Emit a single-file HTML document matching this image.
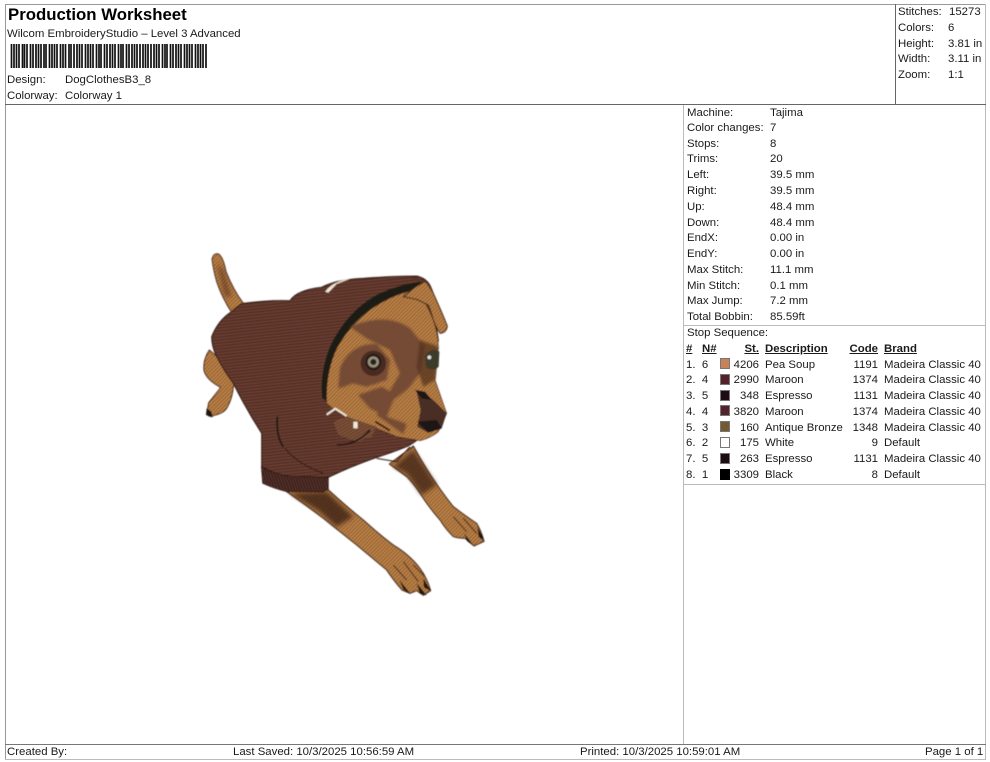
<!DOCTYPE html>
<html><head><meta charset="utf-8"><style>
html,body{margin:0;padding:0;background:#fff}
#p{position:relative;width:990px;height:762px;overflow:hidden;background:#fff;font-family:"Liberation Sans",sans-serif;font-size:11.4px;color:#1a1a1a}
#p div.t{position:absolute;line-height:18px;white-space:pre}
#p div.r{text-align:right}
#p div.l{position:absolute;background:#777}
#p div.s{position:absolute;width:10px;height:11px;box-sizing:border-box;border:1px solid #777}
.u{font-weight:bold;text-decoration:underline}
</style></head><body><div id="p">
<div class="l" style="left:5px;top:4px;width:981px;height:1px;background:#999"></div>
<div class="l" style="left:5px;top:4px;width:1px;height:755px;background:#999"></div>
<div class="l" style="left:985px;top:4px;width:1px;height:755px;background:#bbb"></div>
<div class="l" style="left:5px;top:104px;width:981px;height:1px;background:#666"></div>
<div class="l" style="left:895px;top:4px;width:1px;height:100px;background:#666"></div>
<div class="l" style="left:683px;top:105px;width:1px;height:640px;background:#bbb"></div>
<div class="l" style="left:684px;top:325px;width:302px;height:1px;background:#bbb"></div>
<div class="l" style="left:684px;top:484px;width:302px;height:1px;background:#bbb"></div>
<div class="l" style="left:5px;top:744px;width:981px;height:1px;background:#777"></div>
<div class="l" style="left:5px;top:759px;width:981px;height:1px;background:#bbb"></div>

<div class="t" style="left:8px;top:6px;font-size:16.8px;line-height:18px;font-weight:bold;color:#000">Production Worksheet</div>
<div class="t" style="left:7px;top:25px">Wilcom EmbroideryStudio – Level 3 Advanced</div>
<svg style="position:absolute;left:0;top:0" width="220" height="70"><path stroke="#111" fill="none" d="M11.5 44V68M14 44V68M16.5 44V68M19 44V68M22.5 44V68M24.5 44V68M27 44V68M30.5 44V68M33 44V68M36 44V68M38.5 44V68M41 44V68M44 44V68M46 44V68M49.5 44V68M52 44V68M54.5 44V68M57 44V68M60.5 44V68M63 44V68M65.5 44V68M69 44V68M71 44V68M74 44V68M77 44V68M79.5 44V68M82 44V68M85.5 44V68M88 44V68M90.5 44V68M93 44V68M96.5 44V68M99 44V68M101 44V68M104.5 44V68M107 44V68M110 44V68M112.5 44V68M115 44V68M118.5 44V68M121 44V68M123 44V68M126.5 44V68M129 44V68M132 44V68M134.5 44V68M137 44V68M140 44V68M143 44V68M145.5 44V68M148 44V68M151 44V68M154 44V68M156.5 44V68M159 44V68M162.5 44V68M165 44V68M167 44V68M170.5 44V68M173 44V68M176 44V68M178.5 44V68M181 44V68M184.5 44V68M187 44V68M189.5 44V68M192 44V68M195.5 44V68M198 44V68M200.5 44V68M203 44V68M206 44V68" stroke-width="1.7"/></svg>
<div class="t" style="left:7px;top:71px">Design:</div><div class="t" style="left:65px;top:71px">DogClothesB3_8</div>
<div class="t" style="left:7px;top:87px">Colorway:</div><div class="t" style="left:65px;top:87px">Colorway 1</div>

<div class="t" style="left:898px;top:3px">Stitches:</div><div class="t" style="left:949px;top:3px">15273</div>
<div class="t" style="left:898px;top:19px">Colors:</div><div class="t" style="left:948px;top:19px">6</div>
<div class="t" style="left:898px;top:35px">Height:</div><div class="t" style="left:948px;top:35px">3.81 in</div>
<div class="t" style="left:898px;top:50px">Width:</div><div class="t" style="left:948px;top:50px">3.11 in</div>
<div class="t" style="left:898px;top:66px">Zoom:</div><div class="t" style="left:948px;top:66px">1:1</div>

<div class="t" style="left:687px;top:104px">Machine:</div><div class="t" style="left:770px;top:104px">Tajima</div>
<div class="t" style="left:687px;top:119px">Color changes:</div><div class="t" style="left:770px;top:119px">7</div>
<div class="t" style="left:687px;top:135px">Stops:</div><div class="t" style="left:770px;top:135px">8</div>
<div class="t" style="left:687px;top:150px">Trims:</div><div class="t" style="left:770px;top:150px">20</div>
<div class="t" style="left:687px;top:166px">Left:</div><div class="t" style="left:770px;top:166px">39.5 mm</div>
<div class="t" style="left:687px;top:182px">Right:</div><div class="t" style="left:770px;top:182px">39.5 mm</div>
<div class="t" style="left:687px;top:198px">Up:</div><div class="t" style="left:770px;top:198px">48.4 mm</div>
<div class="t" style="left:687px;top:214px">Down:</div><div class="t" style="left:770px;top:214px">48.4 mm</div>
<div class="t" style="left:687px;top:229px">EndX:</div><div class="t" style="left:770px;top:229px">0.00 in</div>
<div class="t" style="left:687px;top:245px">EndY:</div><div class="t" style="left:770px;top:245px">0.00 in</div>
<div class="t" style="left:687px;top:261px">Max Stitch:</div><div class="t" style="left:770px;top:261px">11.1 mm</div>
<div class="t" style="left:687px;top:277px">Min Stitch:</div><div class="t" style="left:770px;top:277px">0.1 mm</div>
<div class="t" style="left:687px;top:292px">Max Jump:</div><div class="t" style="left:770px;top:292px">7.2 mm</div>
<div class="t" style="left:687px;top:308px">Total Bobbin:</div><div class="t" style="left:770px;top:308px">85.59ft</div>
<div class="t" style="left:687px;top:324px">Stop Sequence:</div>

<div class="t u" style="left:686px;top:340px">#</div><div class="t u" style="left:702px;top:340px">N#</div>
<div class="t r u" style="left:719px;width:40px;top:340px">St.</div><div class="t u" style="left:765px;top:340px">Description</div>
<div class="t r u" style="left:838px;width:40px;top:340px">Code</div><div class="t u" style="left:884px;top:340px">Brand</div>

<div class="t" style="left:686px;top:356px">1.  6</div><div class="s" style="left:720px;top:358px;background:#c98258"></div><div class="t r" style="left:719px;width:40px;top:356px">4206</div><div class="t" style="left:765px;top:356px">Pea Soup</div><div class="t r" style="left:838px;width:40px;top:356px">1191</div><div class="t" style="left:884px;top:356px">Madeira Classic 40</div>
<div class="t" style="left:686px;top:371px">2.  4</div><div class="s" style="left:720px;top:374px;background:#54222a"></div><div class="t r" style="left:719px;width:40px;top:371px">2990</div><div class="t" style="left:765px;top:371px">Maroon</div><div class="t r" style="left:838px;width:40px;top:371px">1374</div><div class="t" style="left:884px;top:371px">Madeira Classic 40</div>
<div class="t" style="left:686px;top:387px">3.  5</div><div class="s" style="left:720px;top:390px;background:#1e0c10"></div><div class="t r" style="left:719px;width:40px;top:387px">348</div><div class="t" style="left:765px;top:387px">Espresso</div><div class="t r" style="left:838px;width:40px;top:387px">1131</div><div class="t" style="left:884px;top:387px">Madeira Classic 40</div>
<div class="t" style="left:686px;top:403px">4.  4</div><div class="s" style="left:720px;top:405px;background:#54222a"></div><div class="t r" style="left:719px;width:40px;top:403px">3820</div><div class="t" style="left:765px;top:403px">Maroon</div><div class="t r" style="left:838px;width:40px;top:403px">1374</div><div class="t" style="left:884px;top:403px">Madeira Classic 40</div>
<div class="t" style="left:686px;top:419px">5.  3</div><div class="s" style="left:720px;top:421px;background:#735a30"></div><div class="t r" style="left:719px;width:40px;top:419px">160</div><div class="t" style="left:765px;top:419px">Antique Bronze</div><div class="t r" style="left:838px;width:40px;top:419px">1348</div><div class="t" style="left:884px;top:419px">Madeira Classic 40</div>
<div class="t" style="left:686px;top:434px">6.  2</div><div class="s" style="left:720px;top:437px;background:#fff"></div><div class="t r" style="left:719px;width:40px;top:434px">175</div><div class="t" style="left:765px;top:434px">White</div><div class="t r" style="left:838px;width:40px;top:434px">9</div><div class="t" style="left:884px;top:434px">Default</div>
<div class="t" style="left:686px;top:450px">7.  5</div><div class="s" style="left:720px;top:453px;background:#1e0c10"></div><div class="t r" style="left:719px;width:40px;top:450px">263</div><div class="t" style="left:765px;top:450px">Espresso</div><div class="t r" style="left:838px;width:40px;top:450px">1131</div><div class="t" style="left:884px;top:450px">Madeira Classic 40</div>
<div class="t" style="left:686px;top:466px">8.  1</div><div class="s" style="left:720px;top:469px;background:#000;border-color:#000"></div><div class="t r" style="left:719px;width:40px;top:466px">3309</div><div class="t" style="left:765px;top:466px">Black</div><div class="t r" style="left:838px;width:40px;top:466px">8</div><div class="t" style="left:884px;top:466px">Default</div>

<div class="t" style="left:7px;top:743px">Created By:</div>
<div class="t" style="left:233px;top:743px">Last Saved: 10/3/2025 10:56:59 AM</div>
<div class="t" style="left:580px;top:743px">Printed: 10/3/2025 10:59:01 AM</div>
<div class="t" style="left:925px;top:743px">Page 1 of 1</div>

<svg style="position:absolute;left:190px;top:240px" width="310" height="370" viewBox="0 0 930 1110">
<defs>
<pattern id="h" width="9" height="9" patternUnits="userSpaceOnUse" patternTransform="rotate(-6)"><rect width="9" height="9" fill="#6a3e32"/><rect width="9" height="3" fill="#482820"/></pattern>
<pattern id="c" width="8" height="8" patternUnits="userSpaceOnUse" patternTransform="rotate(-45)"><rect width="8" height="8" fill="#c0864c"/><rect width="8" height="3" fill="#885628"/></pattern>
<pattern id="d" width="8" height="8" patternUnits="userSpaceOnUse" patternTransform="rotate(-30)"><rect width="8" height="8" fill="#82543a"/><rect width="8" height="3" fill="#5a3828"/></pattern>
<pattern id="k" width="8" height="8" patternUnits="userSpaceOnUse" patternTransform="rotate(70)"><rect width="8" height="8" fill="#54302a"/><rect width="8" height="3" fill="#301a16"/></pattern>
<filter id="b" x="-5%" y="-5%" width="110%" height="110%"><feGaussianBlur stdDeviation="1.6"/></filter>
<filter id="b2" x="-20%" y="-20%" width="140%" height="140%"><feGaussianBlur stdDeviation="6"/></filter>
<filter id="b3" x="-20%" y="-20%" width="140%" height="140%"><feGaussianBlur stdDeviation="3.5"/></filter>
</defs>
<g filter="url(#b)" stroke-linejoin="round">
<!-- tail -->
<path fill="url(#c)" stroke="#4a2c1e" stroke-width="3" d="M66 58Q70 38 86 42Q100 52 108 95Q130 150 160 190L125 218Q95 170 80 125Q70 90 66 58Z"/>
<path fill="#4a2a1e" opacity=".55" filter="url(#b2)" d="M80 70L100 90L125 170L105 170Z"/>
<!-- back leg -->
<path fill="url(#c)" stroke="#4a2c1e" stroke-width="3" d="M58 330Q38 360 42 392Q50 420 92 442Q72 468 56 488L50 522Q60 534 72 526Q104 520 114 498Q128 470 130 440L140 400Z"/>
<path fill="#1a1210" d="M50 505L48 525L68 532L64 515Z"/>
<!-- left front leg -->
<path fill="url(#c)" stroke="#3a2018" stroke-width="3" d="M290 755L410 745Q470 800 520 840Q570 885 610 915Q660 945 690 985Q712 1015 722 1052L700 1066L680 1052L660 1060L636 1050Q610 1020 590 990Q560 965 500 915Q450 875 400 835Q340 790 290 755Z"/>
<path fill="#3e2218" opacity=".8" filter="url(#b2)" d="M300 760L410 755L490 830L440 860L390 815Z"/>
<!-- right front leg -->
<path fill="url(#c)" stroke="#3a2018" stroke-width="3" d="M598 672L670 618Q690 655 712 690Q750 750 790 800Q830 830 860 850Q875 875 882 904L852 918L825 895Q805 895 790 890Q765 865 750 840Q715 800 690 760Q670 730 650 710Z"/>
<path fill="#3e2218" opacity=".75" filter="url(#b2)" d="M610 680L670 630L740 735L695 765L650 700Z"/>
<path fill="#1a1210" d="M628 1020L660 1060L640 1048ZM680 1030L710 1066L690 1060ZM700 1015L722 1052L702 1042ZM822 880L852 918L832 904ZM862 860L884 904L866 890Z"/>
<path fill="none" stroke="#4a2a1e" stroke-width="3" d="M610 975L650 1020M640 965L685 1025M670 975L705 1010M790 830L830 875M820 835L860 880"/>
<!-- hoodie body -->
<path fill="url(#h)" stroke="#2e1814" stroke-width="3" d="M160 190Q230 180 300 182Q320 150 395 142Q440 118 520 115Q620 108 680 108Q710 115 722 140L745 300L730 420L720 560Q690 600 650 620Q600 640 560 652Q480 680 415 712L400 725L300 715Q250 700 215 680L215 580Q170 510 130 430Q100 390 80 350Q65 320 65 290Q85 240 125 215Q140 198 160 190Z"/>
<path fill="#eee8d8" d="M405 155Q430 122 482 116L440 132L415 158Z"/>
<!-- cuff -->
<path fill="url(#k)" stroke="#2a1614" stroke-width="2" d="M214 680Q260 705 300 708L415 712L415 748L400 756L290 755Q250 745 218 730Z"/>
<!-- hood shadow -->
<path fill="#1e1a14" d="M397 475Q388 400 420 320Q470 215 560 165Q620 135 690 125L700 145L620 165L545 205L485 260L445 340L422 420L420 490Z"/>
<!-- face -->
<path fill="url(#c)" stroke="#4a2c1e" stroke-width="2" d="M410 490Q405 400 440 325Q490 235 570 190Q630 155 680 150Q710 190 730 240Q745 285 745 320L735 420L770 520L745 575Q720 595 690 602L620 590L560 565Q500 545 450 520Q425 505 410 490Z"/>
<!-- ear -->
<path fill="url(#c)" stroke="#4a2c1e" stroke-width="3" d="M640 170Q680 135 706 125Q720 130 730 160Q755 215 772 258Q770 278 750 280Q740 265 730 240Q722 210 715 195L680 178Z"/>
<path fill="#5a3428" d="M660 112Q700 110 722 140L735 170L708 128L675 122Z"/>
<!-- face markings -->
<g filter="url(#b3)">
<path fill="url(#d)" d="M480 260Q590 215 660 265L705 320L690 400L655 445L610 480L590 530L650 552L640 582L560 525L590 470L630 400L600 330L530 295Z"/>
<path fill="url(#d)" d="M450 385Q480 310 560 312L600 360L590 420L530 440L490 430L445 445Z"/>
<path fill="url(#d)" d="M505 465L575 440L600 455L580 525L540 505Z"/>
<path fill="#50301f" opacity=".7" d="M690 300L745 320L735 420L700 440L680 380Z"/>
</g>
<ellipse cx="550" cy="370" rx="38" ry="38" fill="#4a2c20"/><circle cx="550" cy="366" r="24" fill="#241a14"/><circle cx="550" cy="366" r="17" fill="#98917c"/><circle cx="550" cy="366" r="9" fill="#2a221c"/>
<path fill="#3e3a2c" d="M705 345Q725 320 748 335L746 380Q730 395 708 382Z"/><circle cx="718" cy="352" r="6" fill="#ddd"/>
<!-- nose -->
<path fill="#4a2e28" d="M680 455L705 460L735 485L770 520L755 565L715 578L682 560L692 510Z"/>
<path fill="#1e1614" d="M675 450L705 455L725 480L695 475ZM682 545L740 540L755 565L715 578Z"/>
<!-- collar / chin -->
<path fill="url(#d)" d="M430 545L470 530L560 560L545 590L500 605L445 585Z"/>
<path fill="none" stroke="#eee8d8" stroke-width="6" d="M410 524L436 506L470 528"/>
<path fill="#eee8d8" d="M490 545H503V565H490Z"/>
<path fill="none" stroke="#1e1614" stroke-width="5" d="M262 530Q258 590 280 620M440 615Q500 615 540 570M556 545L600 572"/>
<path fill="none" stroke="#2e1814" stroke-width="3" d="M285 625Q320 670 400 700M560 655L620 665L660 620"/>
</g>
</svg>
</div></body></html>
